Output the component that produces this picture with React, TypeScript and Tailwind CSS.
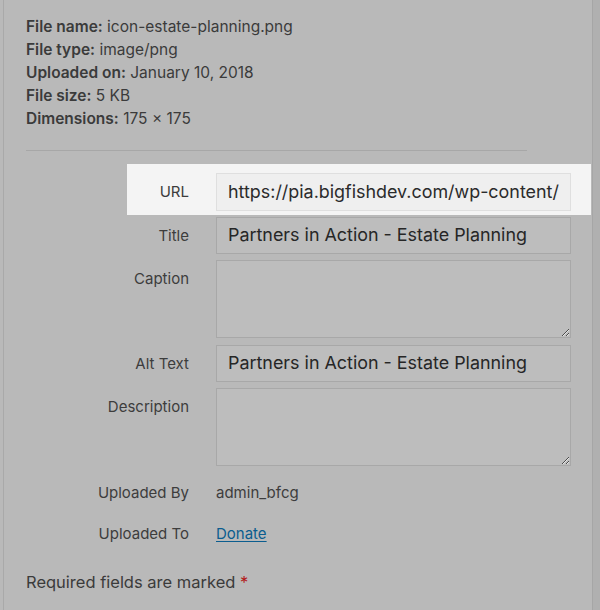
import React from "react";

const font = { fontFamily: "Inter, 'Noto Sans', sans-serif" };

function Row({
  label,
  children,
  className = "",
}: {
  label: string;
  children: React.ReactNode;
  className?: string;
}) {
  return (
    <div className={`flex items-start ${className}`}>
      <div className="w-[62px] shrink-0 text-right text-[15px] leading-[37px] text-[#3d3d3d] whitespace-nowrap flex justify-end">
        <span>{label}</span>
      </div>
      <div className="ml-[27px] w-[355px]">{children}</div>
    </div>
  );
}

export default function App() {
  return (
    <div
      className="w-[600px] h-[610px] overflow-hidden bg-[#b9b9b9] flex"
      style={font}
    >
      <div className="w-[3px] shrink-0" />
      <div className="w-[1px] shrink-0 bg-[#a9a9a9]" />
      <div className="w-[589px] shrink-0 border-r border-[#a6a6a6]">
        <div className="pt-[15px] pl-[22px] text-[15.5px] leading-[23px] text-[#3b3b3b]">
          <div>
            <span className="font-semibold">File name:</span> icon-estate-planning.png
          </div>
          <div>
            <span className="font-semibold">File type:</span> image/png
          </div>
          <div>
            <span className="font-semibold">Uploaded on:</span> January 10, 2018
          </div>
          <div>
            <span className="font-semibold">File size:</span> 5 KB
          </div>
          <div>
            <span className="font-semibold">Dimensions:</span> 175 × 175
          </div>
        </div>
        <div className="ml-[22px] mt-[20px] w-[501px] h-[1px] bg-[#a7a7a7]" />

        <div className="mt-[13px] ml-[123px] w-[464px] bg-[#f4f4f4] pt-[9px] pb-[4px]">
          <Row label="URL">
            <div className="h-[38px] border border-[#dfdfdf] bg-[#efefef] px-[11px] flex items-center text-[17.9px] text-[#2b2b2b] whitespace-nowrap overflow-hidden">
              https://pia.bigfishdev.com/wp-content/
            </div>
          </Row>
        </div>

        <div className="ml-[123px]">
          <Row label="Title" className="mt-[2px]">
            <div className="h-[37px] border border-[#a8a8a8] bg-[#bdbdbd] px-[11px] flex items-center text-[17.9px] text-[#262626] whitespace-nowrap overflow-hidden">
              Partners in Action - Estate Planning
            </div>
          </Row>
          <Row label="Caption" className="mt-[6px]">
            <textarea
              readOnly
              className="block w-full h-[78px] border border-[#a8a8a8] bg-[#bdbdbd] outline-none"
            />
          </Row>
          <Row label="Alt Text" className="mt-[7px]">
            <div className="h-[37px] border border-[#a8a8a8] bg-[#bdbdbd] px-[11px] flex items-center text-[17.9px] text-[#262626] whitespace-nowrap overflow-hidden">
              Partners in Action - Estate Planning
            </div>
          </Row>
          <Row label="Description" className="mt-[6px]">
            <textarea
              readOnly
              className="block w-full h-[78px] border border-[#a8a8a8] bg-[#bdbdbd] outline-none"
            />
          </Row>
          <Row label="Uploaded By" className="mt-[8px]">
            <div className="text-[15px] leading-[37px] text-[#3d3d3d]">admin_bfcg</div>
          </Row>
          <Row label="Uploaded To" className="mt-[4px]">
            <div className="text-[15px] leading-[37px]">
              <a className="text-[#0b5d8f] underline underline-offset-2">Donate</a>
            </div>
          </Row>
        </div>

        <div className="mt-[18px] pl-[22px] text-[16.5px] leading-[24px] text-[#3b3b3b]">
          Required fields are marked <span className="text-[#b31b1b]">*</span>
        </div>
      </div>
      <div className="flex-1 bg-[#b0b0b0]" />
    </div>
  );
}
